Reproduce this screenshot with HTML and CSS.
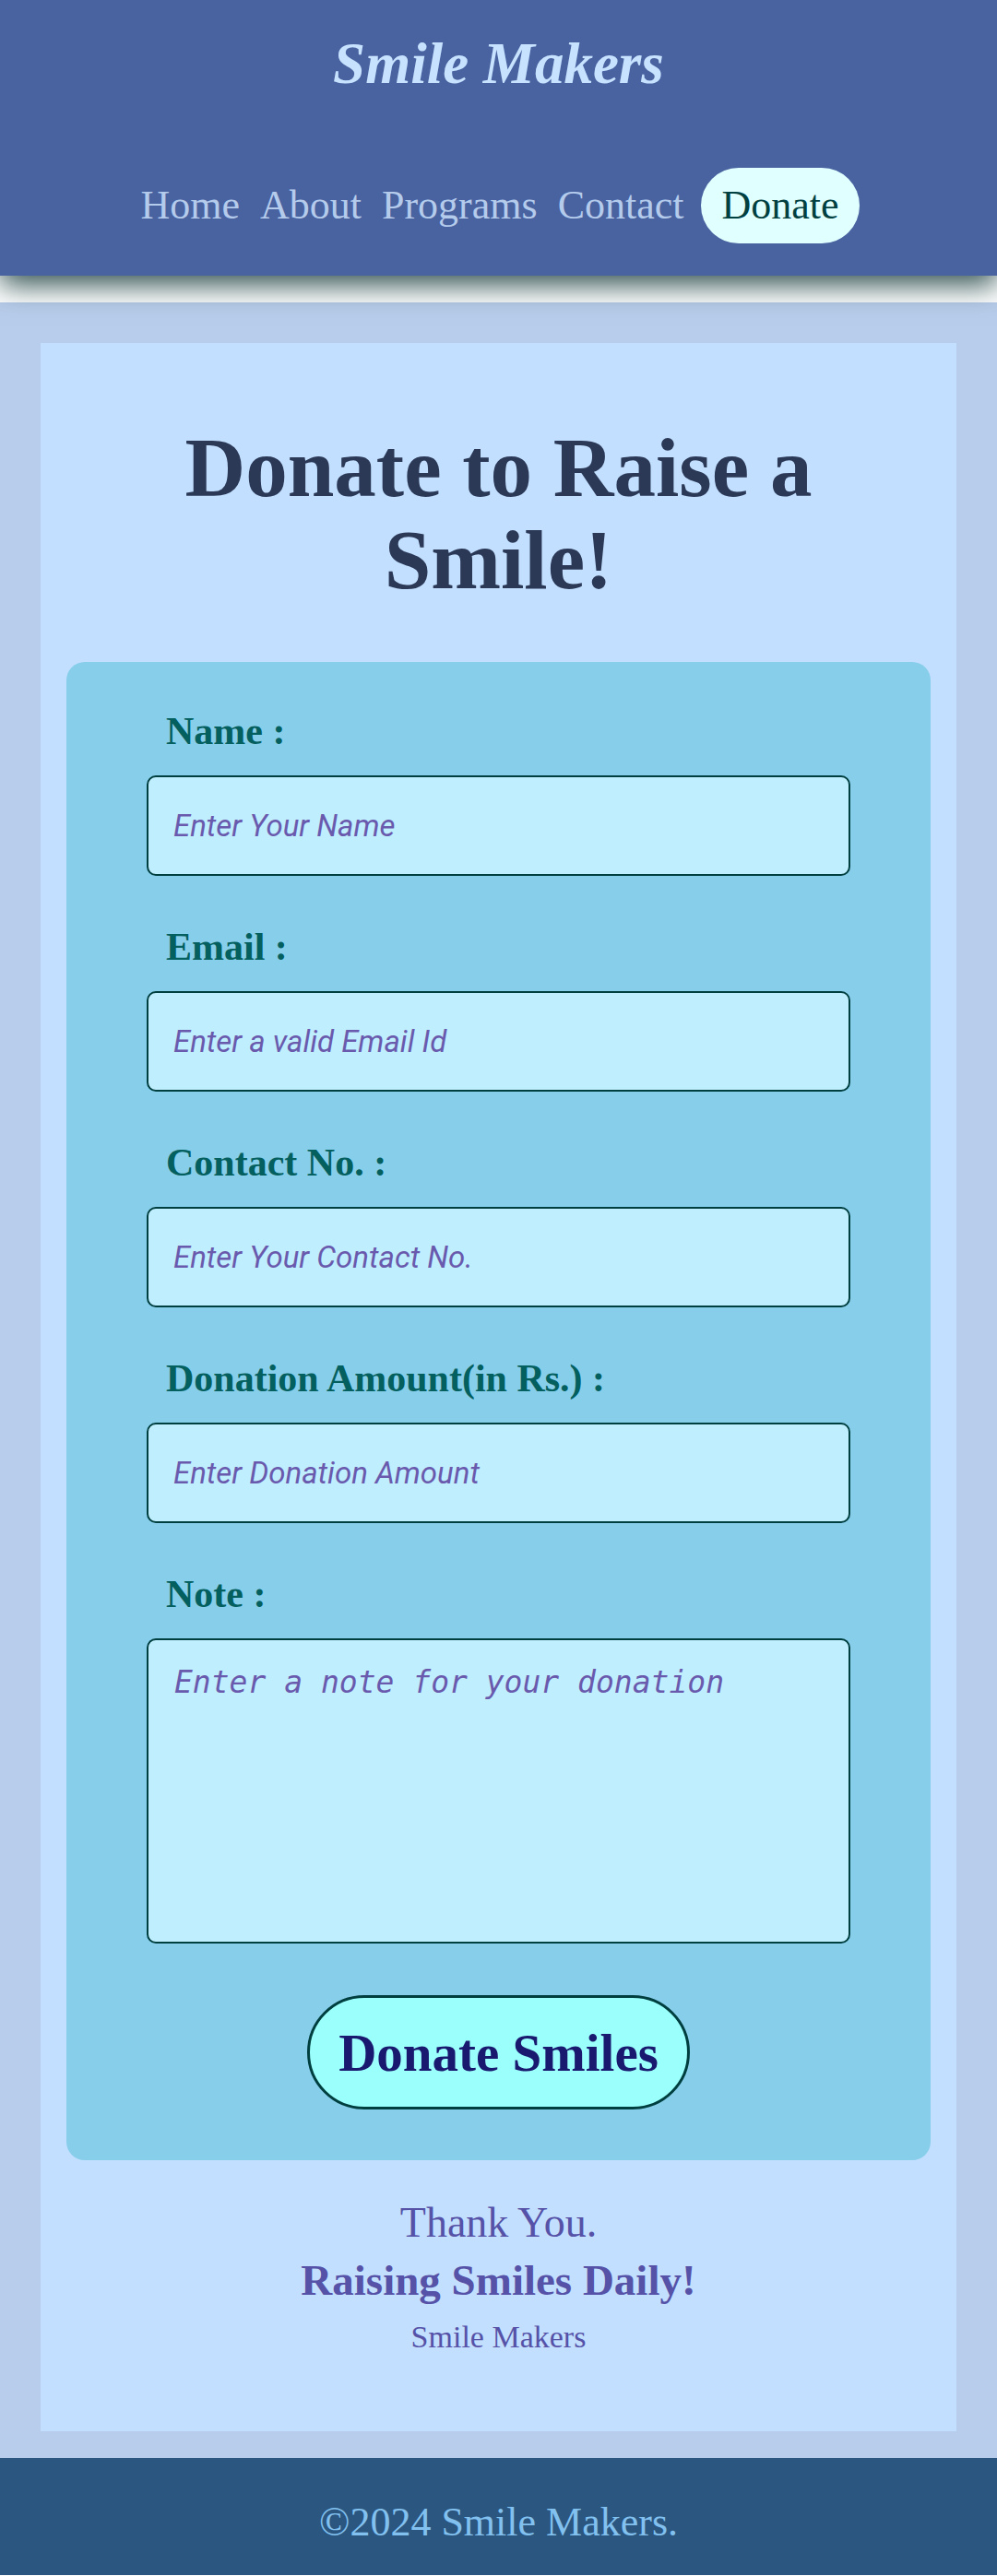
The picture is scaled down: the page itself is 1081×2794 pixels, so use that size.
FILE: index.html
```html
<!DOCTYPE html>
<html lang="en">
<head>
<meta charset="utf-8">
<title>Donate - Smile Makers</title>
<link rel="stylesheet" href="styles.css">
</head>
<body>
<header class="site-header">
  <h1 class="brand">Smile Makers</h1>
  <nav class="nav">
    <a class="nav-link" href="#">Home</a>
    <a class="nav-link" href="#">About</a>
    <a class="nav-link" href="#">Programs</a>
    <a class="nav-link" href="#">Contact</a>
    <a class="nav-link nav-donate" href="#">Donate</a>
  </nav>
</header>
<main class="page">
  <section class="card">
    <h2 class="title">Donate to Raise a Smile!</h2>
    <form class="donate-form">
      <label class="field-label" for="name">Name :</label>
      <input class="field-input" id="name" type="text" placeholder="Enter Your Name">
      <label class="field-label" for="email">Email :</label>
      <input class="field-input" id="email" type="email" placeholder="Enter a valid Email Id">
      <label class="field-label" for="contact">Contact No. :</label>
      <input class="field-input" id="contact" type="tel" placeholder="Enter Your Contact No.">
      <label class="field-label" for="amount">Donation Amount(in Rs.) :</label>
      <input class="field-input" id="amount" type="text" placeholder="Enter Donation Amount">
      <label class="field-label" for="note">Note :</label>
      <textarea class="field-note" id="note" placeholder="Enter a note for your donation"></textarea>
      <button class="submit-btn" type="button">Donate Smiles</button>
    </form>
    <div class="thanks">
      <p class="thanks-main">Thank You.</p>
      <p class="thanks-bold">Raising Smiles Daily!</p>
      <p class="thanks-sign">Smile Makers</p>
    </div>
  </section>
</main>
<footer class="site-footer">
  <p class="copyright">©2024 Smile Makers.</p>
</footer>
</body>
</html>
```
FILE: styles.css
```css
* { box-sizing: border-box; }

html, body {
  margin: 0;
  padding: 0;
}

body {
  background: #ffffff;
  font-family: "Liberation Serif", "Times New Roman", serif;
}

.site-header {
  position: relative;
  z-index: 2;
  background: #4962a0;
  padding: 33px 0 35px;
  margin-bottom: 29px;
  box-shadow: 0 10px 30px #2f4f4f;
}

.brand {
  margin: 0 0 77px;
  text-align: center;
  font-family: "Liberation Serif", serif;
  font-style: italic;
  font-weight: bold;
  font-size: 63px;
  line-height: 72px;
  color: #c6e2ff;
}

.nav {
  display: flex;
  justify-content: center;
  align-items: center;
  gap: 16px;
}

.nav-link {
  font-family: "Liberation Serif", serif;
  font-size: 44px;
  line-height: 50px;
  padding: 16px 3px;
  color: #b4cbec;
  text-decoration: none;
}

.nav-donate {
  background: #e0ffff;
  color: #004040;
  padding: 16px 22px;
  border-radius: 41px;
}

.page {
  background: #b8cdeb;
  padding: 44px 44px 29px;
}

.card {
  background: #c2dfff;
  padding: 86px 28px 75px;
}

.title {
  margin: 0 auto 60px;
  max-width: 820px;
  text-align: center;
  font-family: "Liberation Serif", serif;
  font-weight: bold;
  font-size: 91px;
  line-height: 100px;
  color: #2b3957;
}

.donate-form {
  display: flex;
  flex-direction: column;
  background: #87ceeb;
  border-radius: 20px;
  padding: 51px 87px 55px;
}

.field-label {
  display: block;
  padding-left: 21px;
  margin-bottom: 24px;
  font-family: "Liberation Serif", serif;
  font-weight: bold;
  font-size: 42px;
  line-height: 48px;
  color: #045f5f;
}

.field-input {
  display: block;
  width: 100%;
  height: 109px;
  margin: 0 0 53px;
  padding: 0 27px;
  border: 2px solid #003f3f;
  border-radius: 10px;
  background: #bfefff;
  font-family: Roboto, "Liberation Sans", sans-serif;
  font-style: italic;
  font-size: 33px;
  color: #333366;
}

.field-note {
  display: block;
  width: 100%;
  height: 331px;
  margin: 0;
  padding: 26px 28px;
  border: 2px solid #003f3f;
  border-radius: 10px;
  background: #bfefff;
  font-family: "DejaVu Sans Mono", monospace;
  font-style: italic;
  font-size: 33px;
  resize: none;
  color: #333366;
}

.field-input::placeholder,
.field-note::placeholder {
  color: #6a5aad;
  opacity: 1;
}

.submit-btn {
  align-self: center;
  width: 415px;
  height: 124px;
  margin-top: 56px;
  padding: 0;
  border: 3px solid #003f3f;
  border-radius: 62px;
  background: #9bfffb;
  font-family: "Liberation Serif", serif;
  font-weight: bold;
  font-size: 57px;
  color: #191970;
  cursor: pointer;
}

.thanks {
  margin-top: 40px;
  text-align: center;
  color: #5552a8;
}

.thanks p {
  margin: 0;
  font-family: "Liberation Serif", serif;
}

.thanks-main {
  font-size: 46px;
  line-height: 56px;
}

.thanks-bold {
  font-weight: bold;
  font-size: 47px;
  line-height: 69px;
}

.thanks-sign {
  font-size: 34px;
  line-height: 54px;
}

.site-footer {
  background: #2b5680;
  padding: 44px 0 32px;
}

.copyright {
  margin: 0;
  text-align: center;
  font-family: "Liberation Serif", serif;
  font-size: 44px;
  line-height: 51px;
  color: #82c1ef;
}
```
